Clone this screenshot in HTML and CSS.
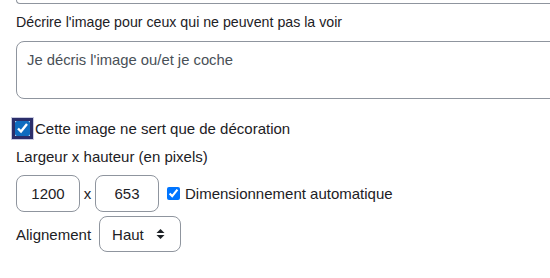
FILE: index.html
```html
<!DOCTYPE html>
<html lang="fr">
<head>
  <meta charset="UTF-8">
  <title>Propriétés de l'image</title>
  <link rel="stylesheet" href="styles.css">
</head>
<body>
  <div class="panneau">
    <div class="boite-haut"></div>

    <label class="titre-alt" for="alt">Décrire l'image pour ceux qui ne peuvent pas la voir</label>
    <textarea id="alt" class="zone">Je décris l'image ou/et je coche</textarea>

    <div class="ligne-deco">
      <input type="checkbox" id="deco" class="case-focus" checked>
      <label for="deco">Cette image ne sert que de décoration</label>
    </div>

    <div class="titre">Largeur x hauteur (en pixels)</div>
    <div class="ligne-taille">
      <input type="text" class="champ" value="1200">
      <span class="fois">x</span>
      <input type="text" class="champ" value="653">
      <input type="checkbox" id="auto" class="case" checked>
      <label for="auto">Dimensionnement automatique</label>
    </div>

    <div class="ligne-align">
      <label for="align">Alignement</label>
      <div class="choix">
        <span>Haut</span>
        <svg width="9" height="12" viewBox="0 0 9 12"><path d="M4.5 1 L8.5 5 H0.5 Z M4.5 11 L8.5 7 H0.5 Z" fill="#1d2125"/></svg>
      </div>
    </div>
  </div>
</body>
</html>
```

FILE: styles.css
```css
body {
  margin: 0;
  background: #fff;
  color: #1d2125;
  font-family: "Liberation Sans", Arial, sans-serif;
  font-size: 15px;
  overflow: hidden;
}

.panneau {
  padding-left: 16px;
  width: 600px;
}

.boite-haut {
  height: 3px;
  border-left: 1px solid #8f959e;
  border-bottom: 1px solid #8f959e;
  border-bottom-left-radius: 8px;
}

.titre-alt {
  display: block;
  margin-top: 10px;
  font-size: 14.2px;
  line-height: 17px;
}

.titre {
  margin-top: 11px;
  line-height: 18px;
}

.zone {
  display: block;
  box-sizing: border-box;
  width: 560px;
  height: 58px;
  margin-top: 10px;
  padding: 10px 10px 8px;
  border: 1px solid #8f959e;
  border-radius: 8px;
  font-family: inherit;
  font-size: 14.8px;
  color: #495057;
  resize: none;
}

.ligne-deco {
  display: flex;
  align-items: center;
  gap: 5px;
  height: 17px;
  margin-top: 21px;
  margin-left: -1px;
}

.case-focus {
  width: 15px;
  height: 15px;
  margin: 0;
  accent-color: #0f6cbf;
  outline: 3px solid #2b2e6a;
  outline-offset: 0;
  box-shadow: 0 0 0 4px #c9cbe0;
}

.ligne-taille {
  display: flex;
  align-items: center;
  margin-top: 9px;
}

.champ {
  box-sizing: border-box;
  width: 64px;
  height: 37px;
  padding: 0 10px;
  border: 1px solid #8f959e;
  border-radius: 8px;
  font-family: inherit;
  font-size: 15px;
  color: #1d2125;
  text-align: center;
}

.fois {
  width: 15px;
  text-align: center;
}

.case {
  width: 13px;
  height: 13px;
  margin: 0 5px 0 8px;
}

.ligne-align {
  display: flex;
  align-items: center;
  gap: 8px;
  margin-top: 4px;
}

.choix {
  box-sizing: border-box;
  width: 82px;
  height: 36px;
  display: flex;
  align-items: center;
  justify-content: space-between;
  padding: 0 15px 0 12px;
  border: 1px solid #8f959e;
  border-radius: 8px;
}
```
